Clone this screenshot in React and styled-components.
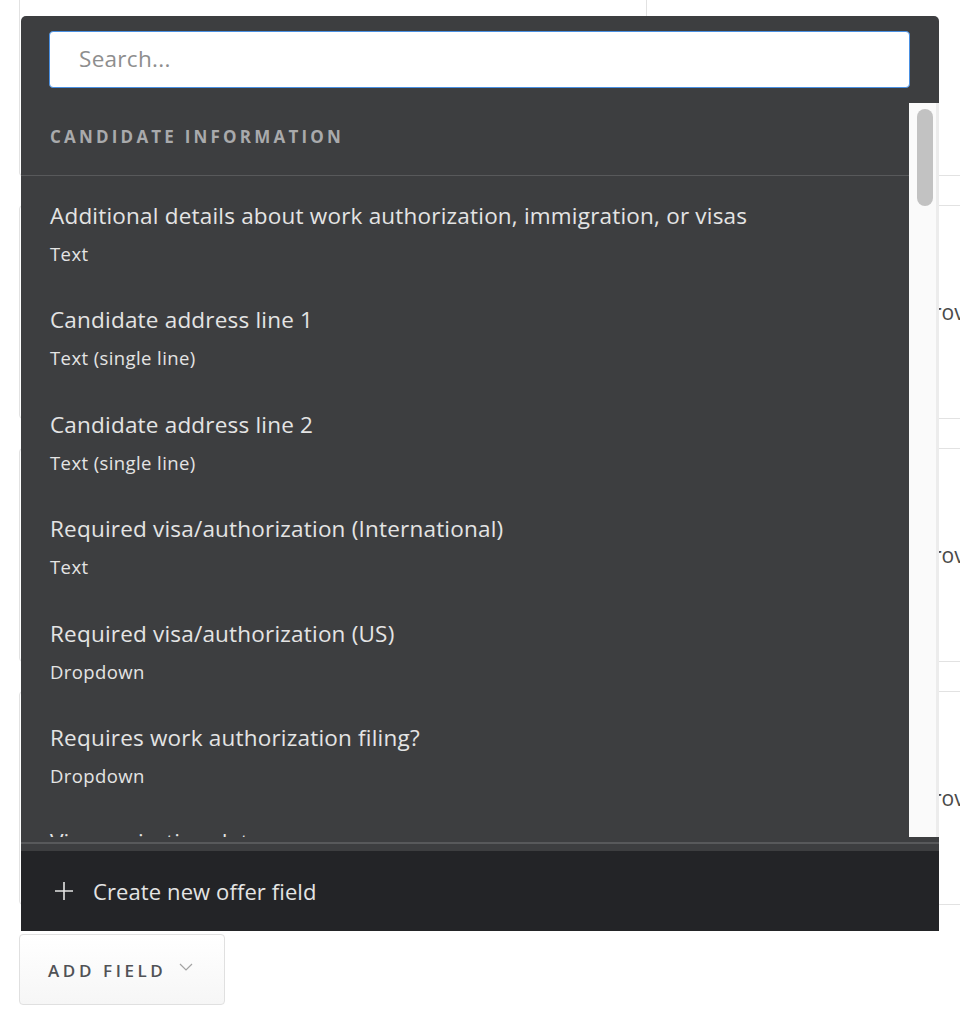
import React from 'react';
import styled, { createGlobalStyle } from 'styled-components';

const GlobalStyle = createGlobalStyle`
  html, body {
    margin: 0;
    padding: 0;
    background: #ffffff;
    font-family: "Open Sans", "Noto Sans", sans-serif;
  }
  * { box-sizing: border-box; }
`;

const FIELDS = [
  { name: 'Additional details about work authorization, immigration, or visas', type: 'Text' },
  { name: 'Candidate address line 1', type: 'Text (single line)' },
  { name: 'Candidate address line 2', type: 'Text (single line)' },
  { name: 'Required visa/authorization (International)', type: 'Text' },
  { name: 'Required visa/authorization (US)', type: 'Dropdown' },
  { name: 'Requires work authorization filing?', type: 'Dropdown' },
  { name: 'Visa expiration date', type: 'Date' },
];

const Page = styled.div`
  position: relative;
  width: 960px;
  height: 1024px;
  overflow: hidden;
  padding-left: 19px;
`;

const CardList = styled.div`
  display: flex;
  flex-direction: column;
  gap: 29px;
  width: 980px;
`;

const Card = styled.div`
  display: grid;
  grid-template-columns: 626px 1fr;
  height: ${(p) => p.height}px;
  border: 1px solid #e2e2e2;
  border-top: ${(p) => (p.open ? 'none' : '1px solid #e2e2e2')};
  border-radius: ${(p) => (p.open ? '0 0 4px 4px' : '4px')};
`;

const CardCell = styled.div`
  display: flex;
  align-items: center;
  padding-left: ${(p) => p.pad || 0}px;
  border-left: ${(p) => (p.divided ? '1px solid #e2e2e2' : 'none')};
  font-size: 21px;
  color: #4a4a4a;
  white-space: nowrap;
`;

const AddButton = styled.button`
  display: flex;
  align-items: center;
  gap: 13px;
  margin-top: 29px;
  width: 206px;
  height: 71px;
  padding: 2px 0 0 28px;
  border: 1px solid #e0e0e0;
  border-radius: 4px;
  background: linear-gradient(#ffffff, #f6f6f6);
  font-family: "Open Sans", "Noto Sans", sans-serif;
  font-size: 17px;
  font-weight: 600;
  letter-spacing: 3.6px;
  color: #505256;
`;

const ChevronWrap = styled.span`
  display: flex;
  margin-top: -8px;
`;

const Menu = styled.div`
  position: absolute;
  top: 16px;
  left: 21px;
  width: 918px;
  background: #3d3e40;
  border-radius: 5px 5px 0 0;
  display: flex;
  flex-direction: column;
`;

const SearchBar = styled.div`
  padding: 15px 29px 15px 28px;
`;

const SearchInput = styled.input`
  display: block;
  width: 100%;
  height: 57px;
  padding: 0 29px 2px;
  border: 1px solid #4a90e2;
  border-radius: 4px;
  background: #ffffff;
  font-family: "Open Sans", "Noto Sans", sans-serif;
  font-size: 22.5px;
  letter-spacing: 0.3px;
  color: #333;
  outline: none;

  &::placeholder {
    color: #8e8e8e;
  }
`;

const ScrollArea = styled.div`
  display: flex;
  height: 734px;
`;

const List = styled.div`
  flex: 1;
  overflow: hidden;
`;

const SectionHeader = styled.div`
  height: 73px;
  padding: 0 29px 6px;
  display: flex;
  align-items: center;
  border-bottom: 1px solid #58595b;
  font-size: 17px;
  font-weight: 700;
  letter-spacing: 3.2px;
  color: #a9aaac;
`;

const Item = styled.div`
  padding: 25px 29px 0;
  height: 104.4px;
`;

const ItemName = styled.div`
  font-size: 22.5px;
  line-height: 30px;
  color: #e4e4e4;
  white-space: nowrap;
  letter-spacing: 0.2px;
`;

const ItemType = styled.div`
  margin-top: 11px;
  font-size: 18.5px;
  line-height: 24px;
  color: #e4e4e4;
  letter-spacing: 0.4px;
`;

const Track = styled.div`
  width: 30px;
  padding: 6px 6px 0 8px;
  background: #fafafa;
  border-right: 3px solid #ececec;
`;

const Thumb = styled.div`
  width: 16px;
  height: 97px;
  border-radius: 8px;
  background: #c2c2c2;
`;

const Divider = styled.div`
  height: 14px;
  padding-top: 5px;

  &::before {
    content: '';
    display: block;
    height: 2px;
    background: #58595b;
  }
`;

const Footer = styled.div`
  height: 80px;
  display: flex;
  align-items: center;
  gap: 19px;
  padding: 0 0 0 33px;
  background: #232427;
  font-size: 22px;
  letter-spacing: 0.1px;
  color: #e4e4e4;
`;

const PlusIcon = () => (
  <svg width="20" height="20" viewBox="0 0 20 20" fill="none" stroke="#e4e4e4" strokeWidth="1.6">
    <path d="M10 1v18M1 10h18" />
  </svg>
);

const Chevron = () => (
  <svg width="14" height="8" viewBox="0 0 14 8" fill="none" stroke="#a3a3a3" strokeWidth="1.2">
    <path d="M1 1l6 6 6-6" />
  </svg>
);

const App = () => {
  return (
    <Page>
      <GlobalStyle />
      <CardList>
        <Card open height={176}>
          <CardCell />
          <CardCell divided />
        </Card>
        <Card height={214}>
          <CardCell />
          <CardCell pad={248}>Approvers</CardCell>
        </Card>
        <Card height={214}>
          <CardCell />
          <CardCell pad={248}>Approvers</CardCell>
        </Card>
        <Card height={214}>
          <CardCell />
          <CardCell pad={248}>Approvers</CardCell>
        </Card>
      </CardList>
      <AddButton>
        ADD FIELD
        <ChevronWrap>
          <Chevron />
        </ChevronWrap>
      </AddButton>

      <Menu>
        <SearchBar>
          <SearchInput placeholder="Search..." />
        </SearchBar>
        <ScrollArea>
          <List>
            <SectionHeader>CANDIDATE INFORMATION</SectionHeader>
            {FIELDS.map((field) => (
              <Item key={field.name}>
                <ItemName>{field.name}</ItemName>
                <ItemType>{field.type}</ItemType>
              </Item>
            ))}
          </List>
          <Track>
            <Thumb />
          </Track>
        </ScrollArea>
        <Divider />
        <Footer>
          <PlusIcon />
          Create new offer field
        </Footer>
      </Menu>
    </Page>
  );
};

export default App;
